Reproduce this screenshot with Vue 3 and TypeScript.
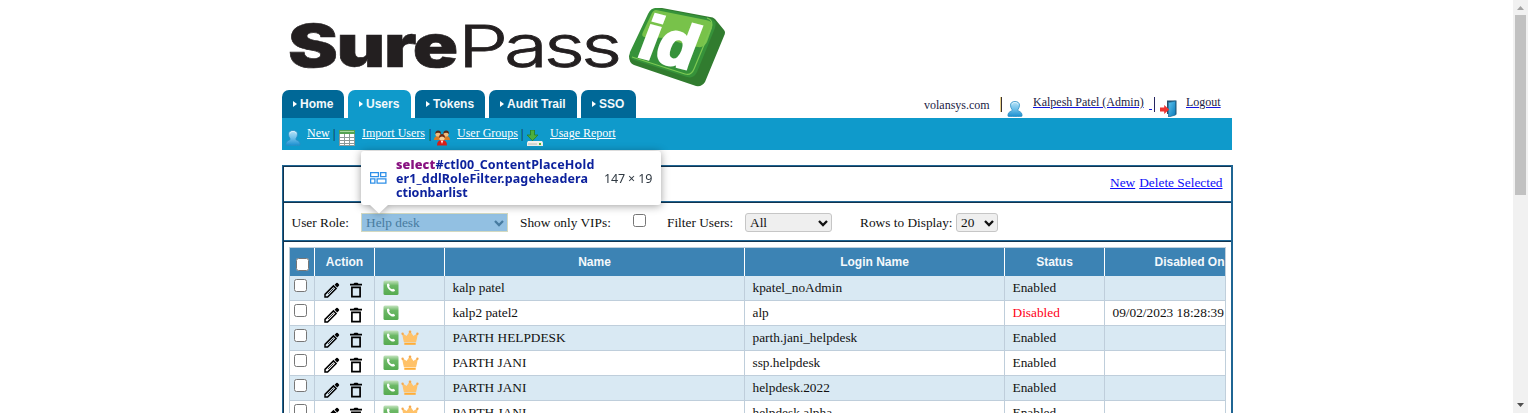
<script setup lang="ts">
interface Row {
  name: string
  login: string
  status: 'Enabled' | 'Disabled'
  disabledOn: string
  vip: boolean
}

const tabs = [
  { label: 'Home', cls: 'home' },
  { label: 'Users', cls: 'users' },
  { label: 'Tokens', cls: 'tokens' },
  { label: 'Audit Trail', cls: 'audit' },
  { label: 'SSO', cls: 'sso' },
]

const rows: Row[] = [
  { name: 'kalp patel', login: 'kpatel_noAdmin', status: 'Enabled', disabledOn: '', vip: false },
  { name: 'kalp2 patel2', login: 'alp', status: 'Disabled', disabledOn: '09/02/2023 18:28:39', vip: false },
  { name: 'PARTH HELPDESK', login: 'parth.jani_helpdesk', status: 'Enabled', disabledOn: '', vip: true },
  { name: 'PARTH JANI', login: 'ssp.helpdesk', status: 'Enabled', disabledOn: '', vip: true },
  { name: 'PARTH JANI', login: 'helpdesk.2022', status: 'Enabled', disabledOn: '', vip: true },
  { name: 'PARTH JANI', login: 'helpdesk.alpha', status: 'Enabled', disabledOn: '', vip: true },
]
</script>

<template>
  <div class="page">
    <svg class="defs" width="0" height="0" aria-hidden="true">
      <defs>
        <linearGradient id="gUser" x1="0" y1="0" x2="0" y2="1">
          <stop offset="0" stop-color="#b9e4f8" /><stop offset=".5" stop-color="#6fc0ea" /><stop offset="1" stop-color="#1b8fd0" />
        </linearGradient>
        <linearGradient id="gPhone" x1="0" y1="0" x2="0" y2="1">
          <stop offset="0" stop-color="#c5e4c0" /><stop offset=".35" stop-color="#6cb866" /><stop offset="1" stop-color="#55ab50" />
        </linearGradient>
        <linearGradient id="gDoor" x1="0" y1="0" x2="1" y2="1">
          <stop offset="0" stop-color="#5cc3ee" /><stop offset="1" stop-color="#0878b8" />
        </linearGradient>
        <symbol id="user" viewBox="0 0 16 16" preserveAspectRatio="none">
          <path d="M1 15.2c-.4-3 1.200-4.400 3.600-5.300.7-.3.7-1 .2-1.700C4 7 3.500 5.600 3.500 4.200 3.500 1.800 5.300.5 8 .5s4.500 1.300 4.500 3.700c0 1.400-.5 2.800-1.300 4-.5.700-.5 1.400.2 1.700 2.400.9 4 2.300 3.600 5.300-.1.400-14 .4-14 0z" fill="url(#gUser)" stroke="#2c8fc4" stroke-width=".8" />
          <path d="M5 3.500C5.300 2 6.500 1.500 8 1.500s2.700.5 3 2" fill="none" stroke="#d9f1fc" stroke-width="1" />
        </symbol>
        <symbol id="phone" viewBox="0 0 16 16">
          <rect x=".5" y=".5" width="15" height="14.500" rx="1.500" fill="url(#gPhone)" />
          <path d="M4.100 4c.9-1 1.700-.6 2.500.9.300.6-.1 1-.5 1.400.4 1.500 1.500 2.500 3 3 .5-.5.900-.8 1.500-.4 1.500.8 1.900 1.500.8 2.300C8.500 13 3 8 4.100 4z" fill="#fff" />
        </symbol>
        <symbol id="crown" viewBox="0 0 18 16">
          <path d="M1.800 4.200 5.700 6.800 9 2l3.300 4.800 3.900-2.600L14.600 11.700H3.400z" fill="#ffc269" stroke="#ffc269" stroke-width="1.200" />
          <path d="M3.300 13.800h11.400" stroke="#ffad35" stroke-width="2" />
          <circle cx="1.600" cy="3.700" r="1.200" fill="#f5aa50" /><circle cx="9" cy="1.800" r="1.300" fill="#f5aa50" /><circle cx="16.400" cy="3.700" r="1.200" fill="#f5aa50" />
        </symbol>
        <symbol id="pencil" viewBox="0 0 16 16">
          <path d="M1 12.400 9.500 3.900l2.600 2.600L3.600 15H1z" fill="none" stroke="#000" stroke-width="1.500" />
          <path d="M4 12l5.500-5.500" stroke="#222" stroke-width=".9" />
          <path d="M10.600 2.800 12.300 1.100q.7-.7 1.400 0l1.200 1.200q.7.700 0 1.400l-1.700 1.700z" fill="#000" />
        </symbol>
        <symbol id="trash" viewBox="0 0 14 16">
          <path d="M1 1.800h3.500L5.500.8h3l1 1H13v1.700H1z" fill="#000" />
          <path d="M2.900 5.400h8.200v9.300H2.900z" fill="none" stroke="#000" stroke-width="1.700" />
        </symbol>
      </defs>
    </svg>

    <div class="content">
      <header class="brand">
        <svg class="logo" width="450" height="90" viewBox="282 0 450 90">
          <text class="sure" x="288" y="67" textLength="169" lengthAdjust="spacingAndGlyphs">Sure</text>
          <text class="pass" x="458" y="67" textLength="160" lengthAdjust="spacingAndGlyphs">Pass</text>
          <path d="M655 8h7l48 9q3 0 5 2l9 11q2 2 0 6l-19 46q-3 5-9 4l-62-21q-5-2-5-9z" fill="#317c2f" />
          <path d="M657 8l52 10q9 2 6 10l-18 44q-3 7-10 5l-53-17q-6-2-4-8l18-38q3-7 9-6z" fill="#36923a" />
          <path d="M656 10l50 10q8 1 6 8l-5 14q-3 6-9 5l-11-2-22-7-21-1q-3-1-1-5l8-17q2-5 5-5z" fill="#78c24a" />
          <path d="M707 18q7 2 4 10l-17 41q-3 7-9 5l-53-17" fill="none" stroke="#7cc953" stroke-width="1.200" />
          <text class="id" transform="matrix(1 .26 -.38 1 635.500 55.500)" x="0" y="0" textLength="54" lengthAdjust="spacingAndGlyphs">id</text>
        </svg>
      </header>

      <div class="topbar">
        <nav class="tabs">
          <a v-for="tab in tabs" :key="tab.cls" class="tab" :class="[tab.cls, { active: tab.cls === 'users' }]">
            <i class="tri"></i>{{ tab.label }}
          </a>
        </nav>
        <div class="account">
          <span class="domain">volansys.com</span>
          <i class="sep gold"></i>
          <svg class="acc-icon" width="16" height="16"><use href="#user" /></svg>
          <a class="who">Kalpesh Patel (Admin)</a>
          <a class="blank">&nbsp;</a>
          <i class="sep"></i>
          <svg class="door" width="17" height="17" viewBox="0 0 17 17">
            <path d="M7 .5h9.500v14H15V2.500H8.500V14H7z" fill="#23506e" />
            <path d="M8.500 2.500 15.500 1v14l-7 2z" fill="url(#gDoor)" stroke="#176592" stroke-width=".7" />
            <path d="M0 7.500h4.200V5L9.200 9.500l-5 4.500v-2.500H0z" fill="#ee3430" />
          </svg>
          <a class="logout">Logout</a>
        </div>
      </div>

      <nav class="subnav">
        <svg class="s-user" width="16" height="16"><use href="#user" /></svg>
        <a class="s-new">New</a><span class="bar">|</span>
        <svg class="s-table" width="16" height="16" viewBox="0 0 16 16">
          <path d="M0 0h16v16H0z" fill="#8c9a98" /><path d="M0 0h16v4H0z" fill="#55a353" /><path d="M1 1h14v1H1z" fill="#a5d69b" />
          <path d="M1 4h4v3H1zM6 4h4v3H6zM11 4h4v3h-4zM1 8h4v2H1zM6 8h4v2H6zM11 8h4v2h-4zM1 11h4v2H1zM6 11h4v2H6zM11 11h4v2h-4zM1 14h4v1H1zM6 14h4v1H6zM11 14h4v1h-4z" fill="#fff" />
        </svg>
        <a class="s-import">Import Users</a><span class="bar">|</span>
        <svg class="s-group" width="16" height="16" viewBox="0 0 16 16">
          <path d="M0 10q0-4 4-4t4 4zM8 10q0-4 4-4t4 4z" fill="#d97a24" />
          <circle cx="4" cy="4" r="2.600" fill="#f3bc7e" /><circle cx="12" cy="4" r="2.600" fill="#f3bc7e" />
          <path d="M1.200 4q0-3.500 3-3.500T7 4Q4 1.500 1.200 4zM9.200 4q0-3.500 3-3.500T15 4q-3-2.500-5.800 0z" fill="#5a2b16" />
          <path d="M3 15.500Q3 10 8 10t5 5.500z" fill="#d91e18" /><circle cx="8" cy="8" r="2.700" fill="#f8cf98" />
          <path d="M5 8q0-4 3-4t3 4q-3-3-6 0z" fill="#702812" /><path d="M7 11h2l-1 3z" fill="#fff" />
        </svg>
        <a class="s-groups">User Groups</a><span class="bar">|</span>
        <svg class="s-report" width="16" height="16" viewBox="0 0 16 16">
          <path d="M1 11h14l1 1.500V16H0v-3.500z" fill="#f1f1ec" /><path d="M1 14h9" stroke="#b9bcb8" /><path d="M12 13h2v2h-2z" fill="#55bb34" />
          <path d="M3.500 0h4v5H11l-5.500 5.700L0 5h3.500z" fill="#4caf3d" stroke="#277d22" stroke-width=".8" />
        </svg>
        <a class="s-usage">Usage Report</a>
      </nav>

      <section class="panel">
        <div class="actions"><a>New</a><a>Delete Selected</a></div>
        <div class="filters">
          <label class="l-role">User Role:</label>
          <div class="field role">
            <span>Help desk</span>
            <svg class="chev" width="10" height="7" viewBox="0 0 10 7"><path d="M1 1l4 4 4-4" /></svg>
          </div>
          <label class="l-vip">Show only VIPs:</label>
          <input class="vip" type="checkbox">
          <label class="l-filter">Filter Users:</label>
          <div class="field all">
            <span>All</span>
            <svg class="chev" width="10" height="7" viewBox="0 0 10 7"><path d="M1 1l4 4 4-4" /></svg>
          </div>
          <label class="l-rows">Rows to Display:</label>
          <div class="field twenty">
            <span>20</span>
            <svg class="chev" width="10" height="7" viewBox="0 0 10 7"><path d="M1 1l4 4 4-4" /></svg>
          </div>
        </div>
        <div class="gridwrap">
          <div class="table">
            <div class="tr head">
              <div class="c-check"><input type="checkbox"></div>
              <div>Action</div><div></div><div>Name</div><div>Login Name</div><div>Status</div>
              <div class="c-last">Disabled On</div>
            </div>
            <div v-for="(row, i) in rows" :key="i" class="tr" :class="{ alt: i % 2 === 0 }">
              <div class="c-check"><input type="checkbox"></div>
              <div class="c-action">
                <svg width="16" height="16"><use href="#pencil" /></svg>
                <svg width="14" height="16"><use href="#trash" /></svg>
              </div>
              <div class="c-flags">
                <svg width="16" height="16"><use href="#phone" /></svg>
                <svg v-if="row.vip" width="18" height="16"><use href="#crown" /></svg>
              </div>
              <div>{{ row.name }}</div>
              <div>{{ row.login }}</div>
              <div :class="{ red: row.status === 'Disabled' }">{{ row.status }}</div>
              <div>{{ row.disabledOn }}</div>
            </div>
          </div>
        </div>
      </section>
    </div>

    <div class="tip">
      <svg class="tip-icon" width="17" height="12" viewBox="0 0 17 12">
        <path d="M.6.600h7.800v4H.6zM10.600.600h5.300v4h-5.300zM.6 6.900h4.300v4.300H.6zM7.100 6.900h8.800v4.300H7.100z" fill="none" stroke="#2f90e8" stroke-width="1.300" />
      </svg>
      <div class="tip-name">
        <div class="t1"><b>select</b>#ctl00_ContentPlaceHold</div>
        <div class="t2">er1_ddlRoleFilter.pageheadera</div>
        <div class="t3">ctionbarlist</div>
      </div>
      <div class="tip-size">147 × 19</div>
      <svg class="tip-arrow" width="18" height="9" viewBox="0 0 18 9"><path d="M0 0h18L9 8.500z" fill="#fff" /></svg>
    </div>

    <aside class="scroll">
      <svg width="15" height="15" viewBox="0 0 15 15"><path d="M4 10h7L7.500 6z" fill="#a3a3a3" /></svg>
      <div class="thumb"></div>
      <svg class="down" width="15" height="15" viewBox="0 0 15 15"><path d="M4 5h7L7.500 9z" fill="#505050" /></svg>
    </aside>
  </div>
</template>

<style>
html, body { margin: 0; overflow: hidden; }
</style>

<style scoped>
.page {
  position: relative;
  display: flex;
  width: 1528px;
  height: 413px;
  overflow: hidden;
  background: #fff;
  font-family: "Liberation Serif", serif;
  font-size: 13.333px;
  color: #111;
  white-space: nowrap;
}
.page * { box-sizing: border-box; }
.defs { position: absolute; }
svg { display: block; flex: none; }
input { margin: 0; width: 13px; height: 13px; flex: none; }
.content { width: 951px; margin-left: 282px; flex: none; }
.brand { height: 90px; }
.sure { font: 900 59px Inter, sans-serif; letter-spacing: -1px; fill: #231f20; stroke: #231f20; stroke-width: .6px; }
.pass { font: 300 58px Inter, sans-serif; letter-spacing: -3px; fill: #231f20; stroke: #231f20; stroke-width: .8px; }
.id { font: bold 58px "Liberation Sans", sans-serif; fill: #fff; stroke: #fff; stroke-width: 3px; }

.topbar { display: flex; justify-content: space-between; height: 28px; width: 950px; }
.tabs { display: flex; gap: 4px; }
.tab {
  display: flex;
  align-items: center;
  height: 28px;
  padding-left: 11px;
  border-radius: 7px 7px 0 0;
  background: #006897;
  color: #f2f8fb;
  font: bold 12px "Liberation Sans", sans-serif;
}
.tri { border: 3.500px solid transparent; border-left: 4px solid #fff; border-right: 0; margin-right: 3px; }
.home { width: 62px; }
.users { width: 63px; }
.tokens { width: 70px; }
.audit { width: 88px; }
.sso { width: 55px; }
.tab.active { background: #0f9acb; }

.account { display: flex; width: 308px; font-size: 12px; line-height: 14px; color: #1b1b44; }
.account a { text-decoration: underline; text-decoration-color: #1414dd; }
.domain { width: 77px; padding-top: 8px; }
.sep { width: 1px; height: 15px; margin-top: 7px; background: #252560; }
.sep.gold { width: 2px; margin-left: -1px; background: linear-gradient(90deg, #e5cf8a 50%, #3a3130 50%); }
.acc-icon { margin: 11px 10px 0 5px; }
.who { width: 111px; padding-top: 5px; }
.blank { width: 4px; margin: 7px 1px 0 5px; }
.door { margin: 10px 0 0 5px; }
.logout { margin-left: 9px; padding-top: 5px; }

.subnav { display: flex; width: 950px; height: 32px; background: #0f9acb; color: #fff; font-size: 12px; line-height: 14px; }
.subnav a { padding-top: 8px; text-decoration: underline; }
.subnav svg { margin-top: 12px; }
.bar { width: 8px; padding: 9px 0 0 3px; color: #111; }
.subnav .s-user { margin-left: 3px; }
.s-new { width: 23px; margin-left: 6px; }
.s-table { margin-left: 1px; }
.s-import { width: 64px; margin-left: 7px; }
.s-group { margin-left: 0; }
.s-groups { width: 61px; margin-left: 7px; }
.s-report { margin-left: 1px; }
.s-usage { margin-left: 7px; }

.panel {
  height: 300px;
  margin-top: 15px;
  padding: 1px 0 0 1px;
  border: solid #1f6593;
  border-width: 1px 2px 1px 1px;
  box-shadow: inset 1px 1px #12344f;
}
.actions, .filters { border-bottom: 1px solid #12344f; box-shadow: inset 0 -1px #1f6593; line-height: 16px; }
.actions { display: flex; justify-content: flex-end; gap: 4px; height: 36px; padding: 8px 8.500px 0 0; }
.actions a { color: #0d0df8; text-decoration: underline; }
.filters { display: flex; height: 39px; }
.filters label { padding-top: 12px; }
.l-role { width: 77px; padding-left: 7.500px; }
.l-vip { width: 125px; padding-left: 12px; }
.vip { margin-top: 11px; }
.l-filter { width: 99px; padding-left: 21px; }
.l-rows { width: 124px; padding-left: 28px; }
.field { display: flex; align-items: center; justify-content: space-between; height: 19px; margin-top: 10px; padding: 1px 3px 0 4px; border: 1px solid #c6c6c6; border-radius: 3px; background: #efefef; color: #111; }
.chev path { fill: none; stroke: currentColor; stroke-width: 2.300; }
.role { width: 147px; border-color: #d3d9c0; border-radius: 0; background: #92c0e2; color: #477ba0; }
.all { width: 87px; }
.twenty { width: 42px; }

.gridwrap { width: 937px; height: 220px; margin: 5px 0 0 5px; overflow: hidden; border: 1px solid #c0cfdb; border-bottom: 0; }
.table { width: 1000px; }
.tr { display: grid; grid-template-columns: 25px 60px 70px 300px 260px 100px 160px; height: 25px; background: #fff; }
.tr > div { padding: 4px 0 0 7.500px; border-right: 1px solid #bfcedb; border-bottom: 1px solid #bfcedb; line-height: 15px; }
.alt { background: #d9e9f3; }
.tr.head { height: 28px; background: #3c83b4; color: #f4f8fb; font: bold 12px "Liberation Sans", sans-serif; }
.tr.head > div { padding: 6.500px 0 0; border-right-color: #fff; border-bottom: 0; text-align: center; }
.tr > .c-check { padding: 3px 0 0 4px; }
.tr.head > .c-check { padding: 10px 0 0 6px; text-align: left; }
.head .c-check input { display: block; }
.tr > .c-action { display: flex; gap: 9px; padding: 5.500px 0 0 9px; }
.tr > .c-flags { display: flex; gap: 2px; padding: 4px 0 0 8px; }
.tr > .red { color: #ff0018; }
.tr.head > .c-last { padding-left: 49.500px; text-align: left; }

.tip { position: absolute; left: 361px; top: 151px; display: flex; width: 300px; height: 54px; border-radius: 3px; background: #fff; filter: drop-shadow(0 1px 4px rgba(0, 0, 0, .38)); }
.tip-icon { margin: 21px 0 0 9px; }
.tip-name { width: 217px; padding: 7px 0 0 9px; color: #0d229d; font: bold 12.500px/14px "Noto Sans", sans-serif; }
.tip-name b { color: #881280; }
.t1 { letter-spacing: .16px; }
.t2 { letter-spacing: .13px; }
.tip-size { padding-top: 20px; color: #303942; font: 12.500px/16px "Noto Sans", sans-serif; letter-spacing: -.15px; }
.tip-arrow { position: absolute; left: 9px; top: 54px; }

.scroll { display: flex; flex-direction: column; width: 15px; height: 413px; margin-left: auto; background: #f1f1f1; }
.thumb { width: 11px; height: 180px; margin-left: 2px; background: #c1c1c1; }
.down { margin-top: auto; }
</style>
